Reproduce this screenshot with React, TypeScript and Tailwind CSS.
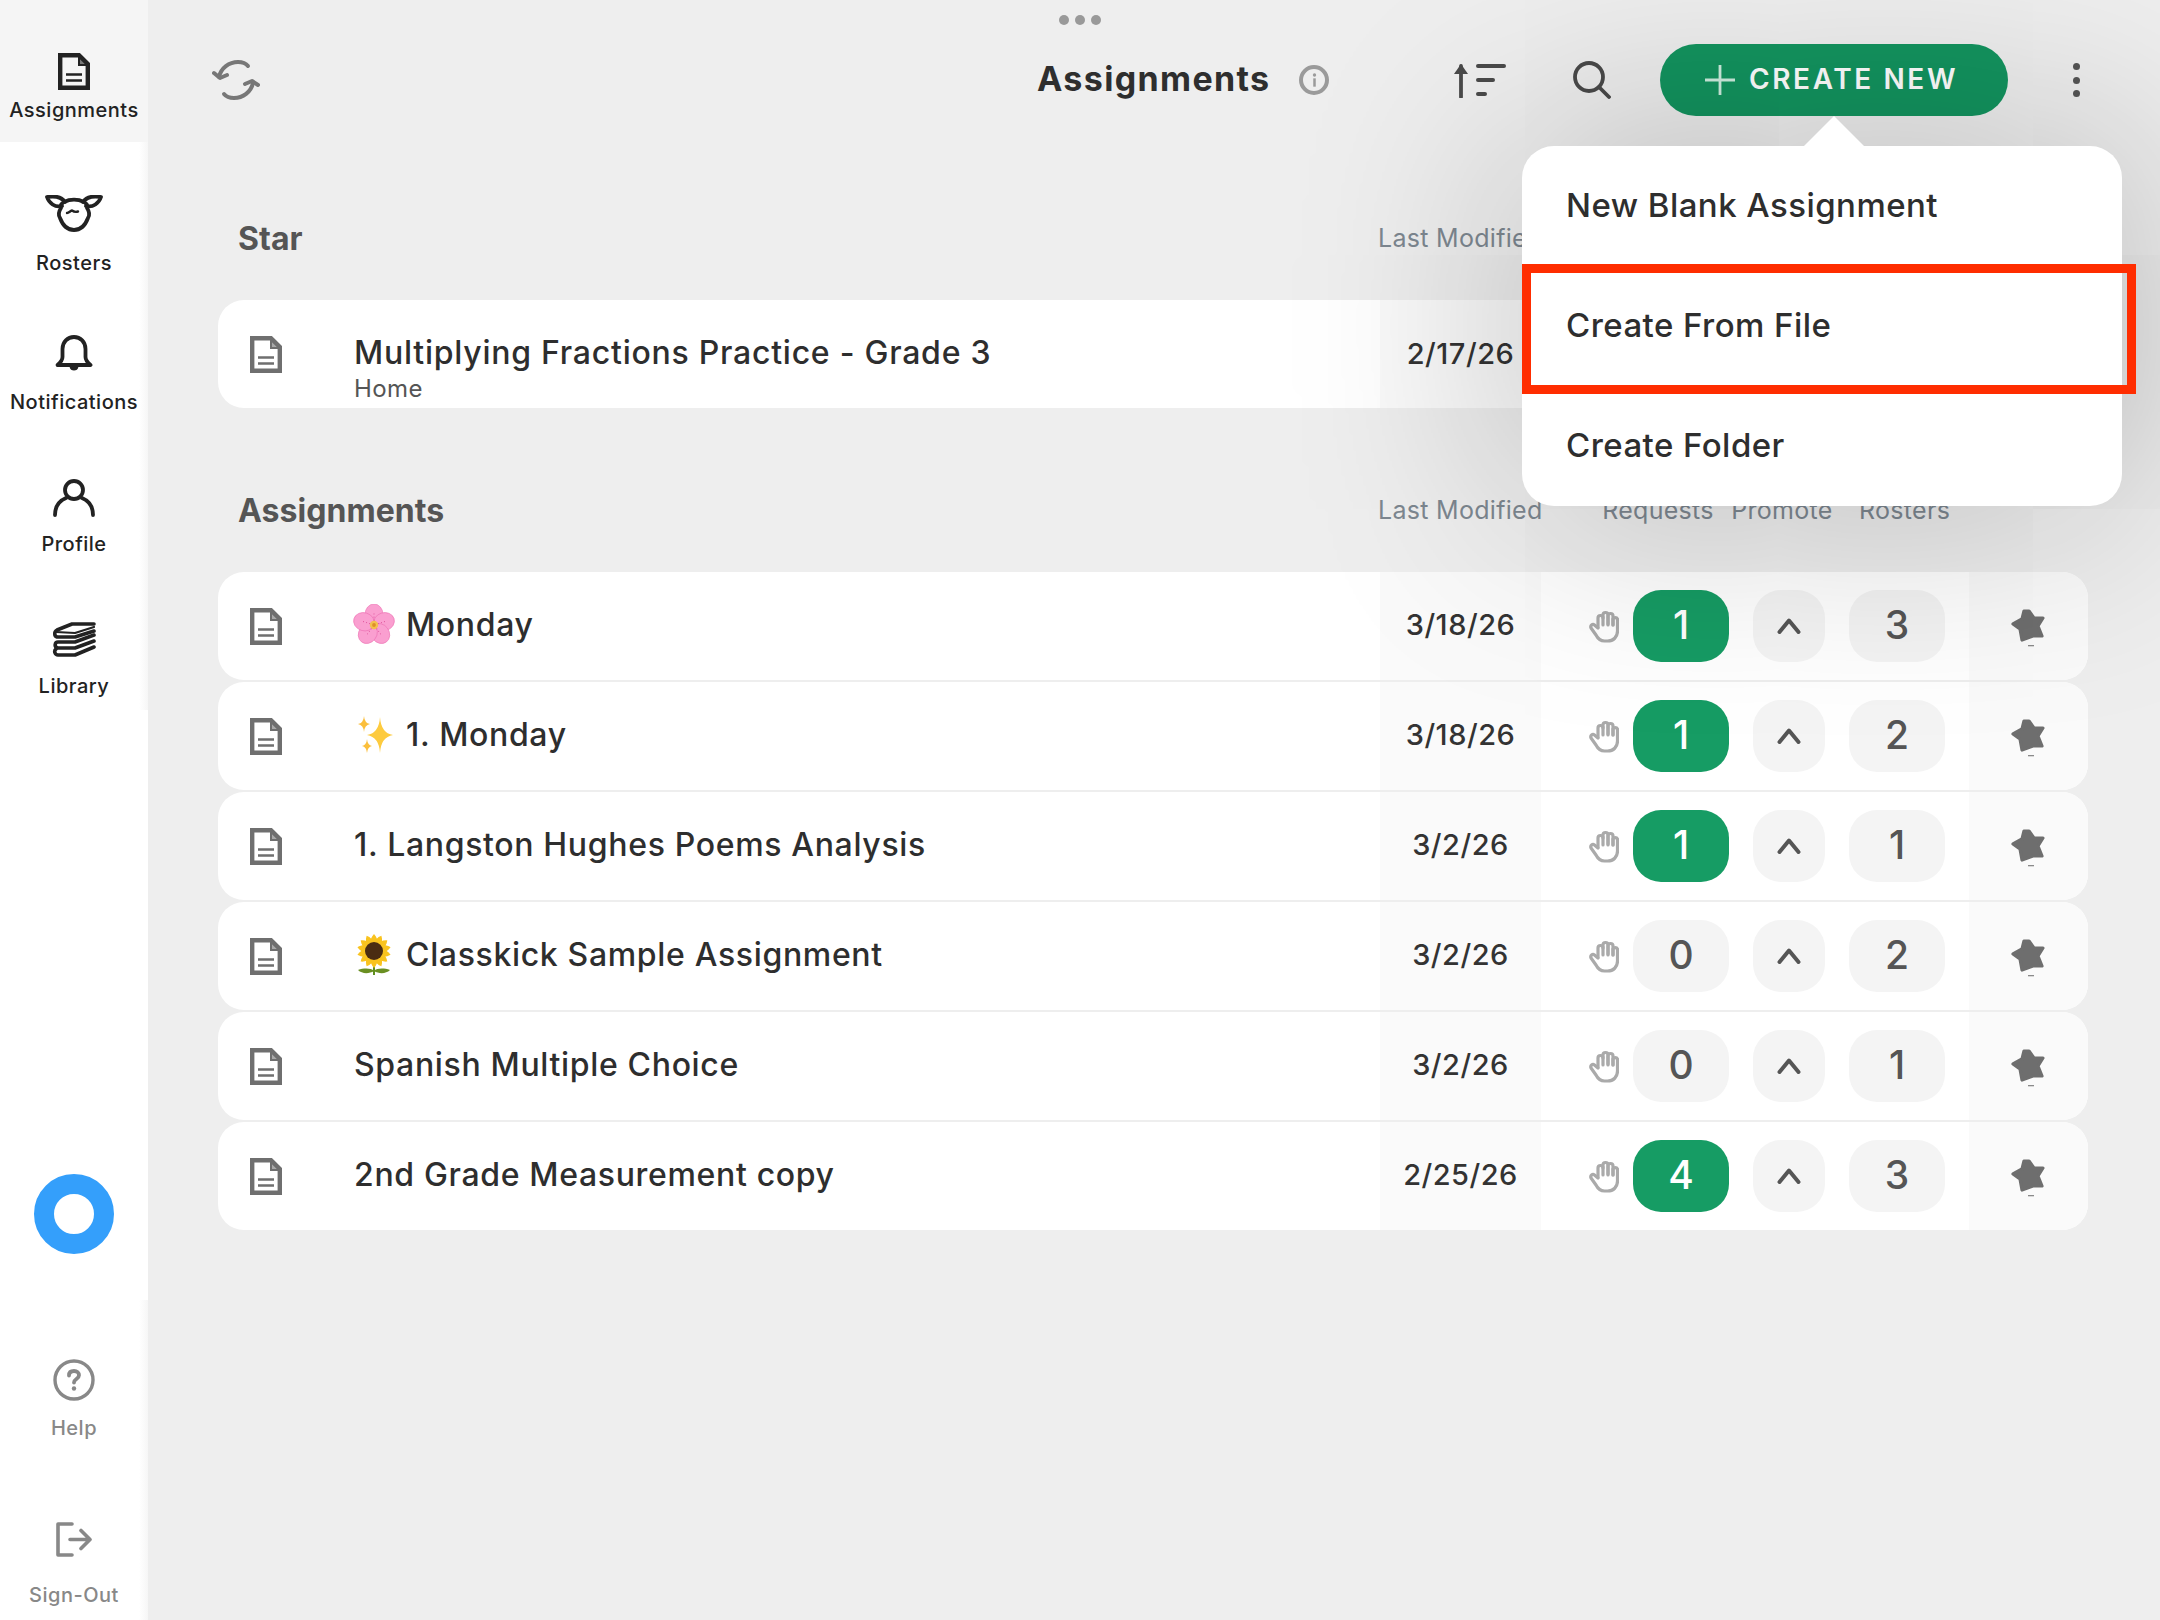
import React from "react";

const font = { fontFamily: '"Inter", "Liberation Sans", sans-serif' };

function FileIcon({ className }: { className?: string }) {
  return (
    <svg viewBox="0 0 32 37" className={className} fill="none">
      <path d="M2.200 2.200h18.800l8.800 8.800v23.800H2.200z" stroke="currentColor" strokeWidth="4.400" strokeLinejoin="miter" />
      <path d="M21 3v9h9" stroke="currentColor" strokeWidth="2" />
      <path d="M21 4l8 8h-8z" fill="currentColor" opacity="0.6" />
      <path d="M8 21.500h16M8 27.500h16" stroke="currentColor" strokeWidth="2.600" />
    </svg>
  );
}

function SheepIcon() {
  return (
    <svg viewBox="0 0 58 37" className="w-[58px] h-[37px]" fill="none" stroke="#222" strokeWidth="3.800" strokeLinejoin="round" strokeLinecap="round">
      <path d="M17 11C10 13 4 8 2 2c6-1 14-1 18 5" />
      <path d="M41 11c7 2 13-3 15-9-6-1-14-1-18 5" />
      <path d="M19 7c6-3 14-3 20 0 3 2 4 3 3 6 2 3 3 7 1 10-3 8-8 12-14 12s-11-4-14-12c-2-3-1-7 1-10-1-3 0-4 3-6z" />
      <path d="M22 18c2 0 3-2 5-2.500 2 1.500 3 2 6 1" strokeWidth="2.400" />
    </svg>
  );
}

function BellIcon() {
  return (
    <svg viewBox="0 0 38 37" className="w-[38px] h-[37px]" fill="none" stroke="#222" strokeWidth="3.800" strokeLinejoin="round" strokeLinecap="round">
      <path d="M2.500 30c3-2.500 5-4.500 5-8v-8C7.500 7 12.500 2 19 2s11.500 5 11.500 12v8c0 3.500 2 5.500 5 8z" />
      <path d="M14.500 31.500c.5 3 2.300 4 4.500 4s4-1 4.500-4z" fill="#222" stroke="none" />
    </svg>
  );
}

function ProfileIcon() {
  return (
    <svg viewBox="0 0 42 38" className="w-[42px] h-[38px]" fill="none" stroke="#222" strokeWidth="3.800" strokeLinecap="round">
      <circle cx="21" cy="11" r="9" />
      <path d="M2 36c0-8 4-14 11-17M40 36c0-8-4-14-11-17" />
    </svg>
  );
}

function LibraryIcon() {
  return (
    <svg viewBox="0 0 44 36" className="w-[44px] h-[36px]" fill="none" stroke="#222" strokeWidth="3.600" strokeLinecap="round" strokeLinejoin="round">
      <path d="M42 2H20L5 8c-3 1.500-3 6 0 7h18l19-6" />
      <path d="M4 10l19 1 19-6" strokeWidth="2.200" />
      <path d="M42 13L23 20H6c-3 0-4.500 5 0 6h17l19-7" />
      <path d="M42 25l-19 8H6c-3 0-4.500-4-2-6" />
    </svg>
  );
}

function HelpIcon() {
  return (
    <svg viewBox="0 0 42 42" className="w-[42px] h-[42px]" fill="none" stroke="#888" strokeWidth="3.400" strokeLinecap="round">
      <circle cx="21" cy="21" r="19" />
      <path d="M16 16.500c0-3 2-4.500 5-4.500s5 1.600 5 4.300c0 3.700-5 3.700-5 7.200" strokeWidth="3.800" />
      <circle cx="21" cy="29.500" r="2.200" fill="#888" stroke="none" />
    </svg>
  );
}

function SignOutIcon() {
  return (
    <svg viewBox="0 0 36 35" className="w-[36px] h-[35px]" fill="none" stroke="#888" strokeWidth="3.600" strokeLinecap="round" strokeLinejoin="round">
      <path d="M16 2H2v31h14" />
      <path d="M14 17.500h20M25 8.500l9 9-9 9" />
    </svg>
  );
}

function SyncIcon() {
  return (
    <svg viewBox="0 0 48 40" className="w-[48px] h-[40px]" fill="none" stroke="#777" strokeWidth="4" strokeLinecap="round" strokeLinejoin="round">
      <path d="M7 17C9 8 17 2 26 2c4 0 8 1.500 10 4" />
      <path d="M2 13l6 5 7-3" />
      <path d="M41 23c-2 9-10 15-19 15-4 0-8-1.500-10-4" />
      <path d="M46 25l-6-4-7 3" />
    </svg>
  );
}

function SortIcon() {
  return (
    <svg viewBox="0 0 54 35" className="w-[54px] h-[35px]" fill="none" stroke="#4a4a4a" strokeLinecap="round">
      <path d="M9 34V3" strokeWidth="3.800" />
      <path d="M2 11l7-10 7 10z" fill="#4a4a4a" stroke="none" />
      <path d="M26 3h26M26 17h15M26 31h7" strokeWidth="4" />
    </svg>
  );
}

function SearchIcon() {
  return (
    <svg viewBox="0 0 38 38" className="w-[38px] h-[38px]" fill="none" stroke="#4a4a4a" strokeWidth="3.800" strokeLinecap="round">
      <circle cx="16" cy="16" r="14" />
      <path d="M26 26l10 10" />
    </svg>
  );
}

function HandIcon() {
  return (
    <svg viewBox="0 0 30 33" className="w-[30px] h-[33px]" fill="none" stroke="#aaa" strokeWidth="3.200" strokeLinecap="round" strokeLinejoin="round">
      <path d="M9 17V8a2.500 2.500 0 0 1 5 0" />
      <path d="M14 15V5a2.500 2.500 0 0 1 5 0v10" />
      <path d="M19 14V6a2.500 2.500 0 0 1 5 0v9" />
      <path d="M24 15V9a2.500 2.500 0 0 1 4.500 0v12c0 6-4 10-10 10h-3c-4 0-6.500-2-8.500-6L2 18c-1-2.500 1.500-4.500 3.500-3L9 18" />
    </svg>
  );
}

function StarIcon() {
  return (
    <svg viewBox="0 0 34 38" className="w-[34px] h-[38px] mt-[4px]">
      <path
        d="M13 2h5l5 7h9l-5 8 4 10h-9l-11 4-2-11-7-5 9-5z"
        fill="#6e6e6e"
        stroke="#6e6e6e"
        strokeWidth="3.200"
        strokeLinejoin="round"
      />
      <rect x="17" y="36" width="6" height="1.300" fill="#8a8a8a" />
    </svg>
  );
}

function FlowerEmoji() {
  const angles = [0, 72, 144, 216, 288];
  return (
    <svg viewBox="0 0 40 40" className="w-[42px] h-[42px] -ml-[1px] -mr-[1px] shrink-0">
      {angles.map((a) => (
        <ellipse key={a} cx="20" cy="10" rx="8.600" ry="10" fill="#fa9fd0" stroke="#ee72b4" strokeWidth="0.600" transform={`rotate(${a} 20 20)`} />
      ))}
      {angles.map((a) => (
        <path key={a} d="M20 16V8" stroke="#e0589f" strokeWidth="0.900" strokeDasharray="1 2" transform={`rotate(${a} 20 20)`} />
      ))}
      <circle cx="20" cy="20" r="4" fill="#f3c04d" />
      <circle cx="20" cy="20" r="1.800" fill="#e08d2a" />
    </svg>
  );
}

function SparkleEmoji() {
  return (
    <svg viewBox="0 0 40 40" className="w-[40px] h-[40px] shrink-0">
      <path d="M26 2Q27 18 39 20Q27 22 26 38Q25 22 13 20Q25 18 26 2z" fill="#fdcb3f" />
      <path d="M10 1Q10.500 8 16 9Q10.500 10 10 17Q9.500 10 4 9Q9.500 8 10 1z" fill="#fbbf3c" />
      <path d="M13 24Q13.500 30 18 31Q13.500 32 13 38Q12.500 32 8 31Q12.500 30 13 24z" fill="#fbbf3c" />
    </svg>
  );
}

function SunflowerEmoji() {
  const angles = Array.from({ length: 14 }, (_, i) => (i * 360) / 14);
  return (
    <svg viewBox="0 0 40 42" className="w-[40px] h-[42px] shrink-0">
      <path d="M20 30v11" stroke="#5f8f1e" strokeWidth="2" />
      <path d="M20 37c-3-3-10-3-16-1 4 4 11 4 16 1zM20 37c3-3 10-3 16-1-4 4-11 4-16 1z" fill="#6a8f22" />
      {angles.map((a) => (
        <path key={a} d="M20 0c3 3 4 7 3.500 10h-7c-.5-3 .5-7 3.500-10z" fill="#f9c31f" transform={`rotate(${a} 20 17)`} />
      ))}
      <circle cx="20" cy="17" r="9" fill="#4a2c12" />
    </svg>
  );
}

const navLabel = "text-[20px] leading-[24px] font-medium tracking-[0.5px]";
const headCell = "text-center text-[25px] text-[#7d8790] tracking-[0.3px] whitespace-nowrap";

function Stat({ value, green }: { value: string; green?: boolean }) {
  return (
    <div
      className={`w-[96px] h-[72px] rounded-[28px] flex items-center justify-center pb-[2px] text-[39px] font-medium ${
        green ? "bg-[#169c64] text-white" : "bg-[#f4f4f4] text-[#555]"
      }`}
    >
      {value}
    </div>
  );
}

type Item = { icon?: React.ReactNode; title: string; date: string; req: string; green: boolean; rosters: string };

const items: Item[] = [
  { icon: <FlowerEmoji />, title: "Monday", date: "3/18/26", req: "1", green: true, rosters: "3" },
  { icon: <SparkleEmoji />, title: "1. Monday", date: "3/18/26", req: "1", green: true, rosters: "2" },
  { title: "1. Langston Hughes Poems Analysis", date: "3/2/26", req: "1", green: true, rosters: "1" },
  { icon: <SunflowerEmoji />, title: "Classkick Sample Assignment", date: "3/2/26", req: "0", green: false, rosters: "2" },
  { title: "Spanish Multiple Choice", date: "3/2/26", req: "0", green: false, rosters: "1" },
  { title: "2nd Grade Measurement copy", date: "2/25/26", req: "4", green: true, rosters: "3" },
];

function Row({ item }: { item: Item }) {
  return (
    <div className="flex h-[108px] bg-white rounded-[26px] overflow-hidden">
      <div className="w-[136px] pl-[32px] flex items-center shrink-0">
        <FileIcon className="w-[32px] h-[37px] text-[#6f6f6f]" />
      </div>
      <div className="w-[1026px] shrink-0 flex items-center gap-[12px] pb-[2px] text-[32px] font-medium text-[#2e2e2e] tracking-[0.66px]">
        {item.icon}
        <span>{item.title}</span>
      </div>
      <div className="w-[161px] shrink-0 bg-[#fafafa] flex items-center justify-center pb-[2px] text-[29px] font-medium text-[#333] tracking-[0.5px]">
        {item.date}
      </div>
      <div className="w-[428px] shrink-0 flex items-center pl-[48px]">
        <HandIcon />
        <div className="ml-[14px]">
          <Stat value={item.req} green={item.green} />
        </div>
        <div className="ml-[24px] w-[72px] h-[72px] rounded-[28px] bg-[#f4f4f4] flex items-center justify-center">
          <svg viewBox="0 0 24 16" className="w-[24px] h-[16px]" fill="none" stroke="#555" strokeWidth="4" strokeLinecap="round" strokeLinejoin="round">
            <path d="M2.500 14L12 2.500 21.500 14" />
          </svg>
        </div>
        <div className="ml-[24px]">
          <Stat value={item.rosters} />
        </div>
      </div>
      <div className="flex-1 bg-[#fafafa] flex items-center justify-center pr-[2px]">
        <StarIcon />
      </div>
    </div>
  );
}

function SectionHead({ title }: { title: string }) {
  return (
    <div className="flex items-center h-[46px]">
      <div className="w-[1160px] shrink-0 pl-[20px] text-[32px] font-bold text-[#555] tracking-[0.05px]">{title}</div>
      <div className={`w-[164px] shrink-0 ${headCell}`}>Last Modified</div>
      <div className={`ml-[60px] w-[112px] ${headCell}`}>Requests</div>
      <div className={`ml-[16px] w-[104px] ${headCell}`}>Promote</div>
      <div className={`ml-[25px] w-[90px] ${headCell}`}>Rosters</div>
    </div>
  );
}

export default function App() {
  return (
    <div className="relative flex w-[2160px] h-[1620px] overflow-hidden bg-[#eeeeee]" style={font}>
      {/* sidebar */}
      <aside className="w-[148px] shrink-0 bg-white flex flex-col">
        <div className="h-[142px] bg-[#f5f5f5] flex flex-col items-center pt-[53px] gap-[8px] text-[#222]">
          <FileIcon className="w-[32px] h-[37px] text-[#222]" />
          <span className={navLabel}>Assignments</span>
        </div>
        <div className="h-[568px] bg-gradient-to-r from-white from-[94%] to-[#f6f6f6] flex flex-col items-center text-[#222]">
          <div className="mt-[53px] flex flex-col items-center gap-[19px]">
            <SheepIcon />
            <span className={navLabel}>Rosters</span>
          </div>
          <div className="mt-[60px] flex flex-col items-center gap-[18px]">
            <BellIcon />
            <span className={navLabel}>Notifications</span>
          </div>
          <div className="mt-[65px] flex flex-col items-center gap-[15px]">
            <ProfileIcon />
            <span className={navLabel}>Profile</span>
          </div>
          <div className="mt-[66px] flex flex-col items-center gap-[16px]">
            <LibraryIcon />
            <span className={navLabel}>Library</span>
          </div>
        </div>
        <div className="h-[590px] flex flex-col items-center">
          <div className="mt-[464px] w-[80px] h-[80px] rounded-full border-[20px] border-[#349ffb] bg-white" />
        </div>
        <div className="flex-1 bg-gradient-to-r from-white from-[94%] to-[#f6f6f6] flex flex-col items-center text-[#888]">
          <div className="mt-[59px] flex flex-col items-center gap-[15px]">
            <HelpIcon />
            <span className={navLabel}>Help</span>
          </div>
          <div className="mt-[82px] flex flex-col items-center gap-[26px]">
            <SignOutIcon />
            <span className={navLabel}>Sign-Out</span>
          </div>
        </div>
      </aside>

      {/* main */}
      <main className="flex-1 min-w-0">
        <header className="h-[116px] pt-[44px] flex items-center">
          <div className="ml-[64px] w-[48px] shrink-0">
            <SyncIcon />
          </div>
          <div className="ml-[777px] w-[231px] shrink-0 pb-[3px] text-[34px] font-bold text-[#2e2e2e] tracking-[1.35px] whitespace-nowrap">Assignments</div>
          <div className="ml-[31px] w-[30px] h-[30px] shrink-0 rounded-full border-[4px] border-[#9a9a9a] flex items-center justify-center">
            <svg viewBox="0 0 6 16" className="w-[5px] h-[14px]">
              <circle cx="3" cy="2" r="2" fill="#9a9a9a" />
              <rect x="1.500" y="6" width="3" height="10" fill="#9a9a9a" />
            </svg>
          </div>
          <div className="ml-[123px] shrink-0">
            <SortIcon />
          </div>
          <div className="ml-[67px] shrink-0">
            <SearchIcon />
          </div>
          <button className="ml-[49px] w-[348px] h-[72px] shrink-0 rounded-full bg-[#13945f] flex items-center text-white pl-[45px]">
            <svg viewBox="0 0 30 30" className="w-[30px] h-[30px] shrink-0" fill="none" stroke="#cfeee0" strokeWidth="2.800">
              <path d="M15 0v30M0 15h30" />
            </svg>
            <span className="ml-[14px] pb-[2px] text-[28px] font-semibold tracking-[2.6px] whitespace-nowrap">CREATE NEW</span>
          </button>
          <div className="ml-[65px] flex flex-col gap-[6.500px] shrink-0">
            <span className="w-[7px] h-[7px] rounded-full bg-[#555]" />
            <span className="w-[7px] h-[7px] rounded-full bg-[#555]" />
            <span className="w-[7px] h-[7px] rounded-full bg-[#555]" />
          </div>
        </header>

        <div className="ml-[70px] w-[1870px]">
          <div className="mt-[100px]">
            <SectionHead title="Star" />
          </div>
          <div className="mt-[38px] flex h-[108px] bg-white rounded-[26px] overflow-hidden">
            <div className="w-[136px] pl-[32px] flex items-center shrink-0">
              <FileIcon className="w-[32px] h-[37px] text-[#6f6f6f]" />
            </div>
            <div className="w-[1026px] shrink-0 flex flex-col pt-[34px]">
              <span className="text-[32px] leading-[38px] font-medium text-[#2e2e2e] tracking-[0.75px] whitespace-nowrap">Multiplying Fractions Practice - Grade 3</span>
              <span className="mt-[2px] text-[24px] leading-[30px] text-[#555] tracking-[0.4px]">Home</span>
            </div>
            <div className="w-[161px] shrink-0 bg-[#fafafa] flex items-center justify-center text-[29px] font-medium text-[#333] tracking-[0.5px]">2/17/26</div>
          </div>

          <div className="mt-[79px] pt-[1px]">
            <SectionHead title="Assignments" />
          </div>
          <div className="mt-[38px] flex flex-col gap-[2px]">
            {items.map((item, i) => (
              <Row key={i} item={item} />
            ))}
          </div>
        </div>
      </main>

      {/* multitasking handle */}
      <div className="absolute top-[15px] left-1/2 -translate-x-1/2 flex gap-[6px]">
        <span className="w-[10px] h-[10px] rounded-full bg-[#999]" />
        <span className="w-[10px] h-[10px] rounded-full bg-[#999]" />
        <span className="w-[10px] h-[10px] rounded-full bg-[#999]" />
      </div>

      {/* popup menu */}
      <div className="absolute left-[1522px] top-[146px] w-[600px] h-[360px] rounded-[32px] bg-white shadow-[0_0_220px_rgba(0,0,0,0.28)] flex flex-col text-[33px] font-medium text-[#2e2e2e] tracking-[0.45px]">
        <div className="absolute left-[282px] -top-[30px] w-0 h-0 border-l-[30px] border-r-[30px] border-b-[30px] border-l-transparent border-r-transparent border-b-white" />
        <div className="h-[120px] flex items-center pl-[44px]">New Blank Assignment</div>
        <div className="h-[120px] flex items-center pl-[44px]">Create From File</div>
        <div className="h-[120px] flex items-center pl-[44px]">Create Folder</div>
      </div>

      {/* red annotation */}
      <div className="absolute left-[1522px] top-[264px] w-[614px] h-[130px] border-[9px] border-[#ff2d00]" />
    </div>
  );
}
